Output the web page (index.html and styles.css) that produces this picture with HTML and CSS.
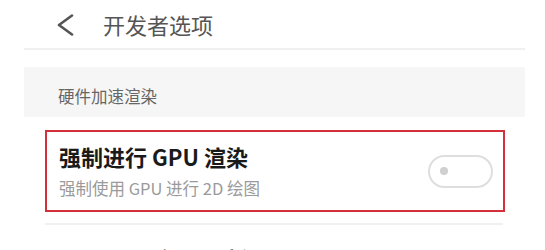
FILE: index.html
```html
<!DOCTYPE html>
<html lang="zh-CN">
<head>
    <meta charset="UTF-8">
    <meta name="viewport" content="width=device-width, initial-scale=1.0">
    <title>开发者选项</title>
    <link rel="stylesheet" href="styles.css">
</head>
<body>
    <div class="topbar">
        <svg class="back" width="18" height="22" viewBox="0 0 18 22">
            <polyline points="16,1.5 3,11 16,20.5" fill="none" stroke="#555" stroke-width="2.6" stroke-linecap="round" stroke-linejoin="round"/>
        </svg>
        <span class="page-title">开发者选项</span>
    </div>
    <div class="divider top"></div>

    <div class="section">硬件加速渲染</div>

    <div class="row highlight">
        <div class="row-text">
            <div class="row-title">强制进行 GPU 渲染</div>
            <div class="row-sub">强制使用 GPU 进行 2D 绘图</div>
        </div>
        <div class="toggle"><span class="dot"></span></div>
    </div>
    <div class="divider item"></div>

    <div class="row next">
        <div class="row-text">
            <div class="row-title">显示 GPU 视图更新</div>
        </div>
    </div>
</body>
</html>
```

FILE: styles.css
```css
* { margin: 0; padding: 0; box-sizing: border-box; }
body { font-family: "Noto Sans CJK SC", "Noto Sans", sans-serif; background: #fff; overflow: hidden; }

.topbar { height: 48px; display: flex; align-items: center; padding-left: 56px; }
.back { display: block; margin-top: 1px; }
.page-title { margin-left: 29px; font-size: 22px; line-height: 22px; color: #555; }

.divider { height: 2px; background: #f0f0f0; }
.divider.top { margin: 0 20px 0 24px; }
.divider.item { margin: 11px 42px 0 45px; }

.section { margin: 17px 20px 0 24px; height: 50px; background: #f6f6f6; padding: 21px 0 0 34px; font-size: 16.5px; line-height: 17px; color: #666; }

.row { margin: 13px 40px 0 45px; display: flex; align-items: center; padding: 0 10px 0 12px; border: 2px solid transparent; }
.row.highlight { border-color: #d3303c; height: 82px; }
.row.next { margin-top: 0; padding-top: 20px; }
.row-text { flex: 1; }
.row-title { font-size: 22px; line-height: 22px; color: #1a1a1a; font-weight: 700; }
.row-next .row-title { color: #333; }
.row-sub { margin-top: 13px; font-size: 16.5px; line-height: 17px; color: #9a9a9a; }

.toggle { width: 65px; height: 33px; border: 2px solid #dedede; border-radius: 17px; display: flex; align-items: center; padding-left: 10px; }
.dot { width: 8px; height: 8px; border-radius: 50%; background: #d0d0d0; }
```
